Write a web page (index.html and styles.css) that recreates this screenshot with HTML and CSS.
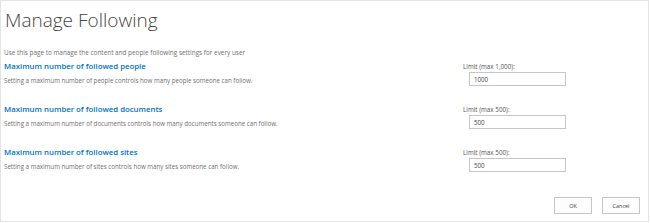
FILE: index.html
```html
<!DOCTYPE html>
<html>
<head>
<meta charset="utf-8">
<link rel="stylesheet" href="styles.css">
</head>
<body>
<div class="frame">
  <h1 class="title">Manage Following</h1>
  <p class="intro">Use this page to manage the content and people following settings for every user</p>
  <div class="section">
    <div class="info">
      <h2 class="heading">Maximum number of followed people</h2>
      <p class="desc">Setting a maximum number of people controls how many people someone can follow.</p>
    </div>
    <div class="field">
      <label class="label">Limit (max 1,000):</label>
      <input class="input" type="text" value="1000">
    </div>
  </div>
  <div class="section">
    <div class="info">
      <h2 class="heading">Maximum number of followed documents</h2>
      <p class="desc">Setting a maximum number of documents controls how many documents someone can follow.</p>
    </div>
    <div class="field">
      <label class="label">Limit (max 500):</label>
      <input class="input" type="text" value="500">
    </div>
  </div>
  <div class="section">
    <div class="info">
      <h2 class="heading">Maximum number of followed sites</h2>
      <p class="desc">Setting a maximum number of sites controls how many sites someone can follow.</p>
    </div>
    <div class="field">
      <label class="label">Limit (max 500):</label>
      <input class="input" type="text" value="500">
    </div>
  </div>
  <div class="buttons">
    <button class="btn">OK</button>
    <button class="btn">Cancel</button>
  </div>
</div>
</body>
</html>
```

FILE: styles.css
```css
html, body {
  margin: 0;
  padding: 0;
  background: #ffffff;
}
body {
  font-family: "Open Sans", "Noto Sans", sans-serif;
  color: #777;
}
.frame {
  box-sizing: border-box;
  width: 649px;
  height: 222px;
  border: 1px solid #e4e4e4;
  padding: 0 0 0 3px;
  display: flex;
  flex-direction: column;
}
.title {
  margin: 5px 0 0 1px;
  font-size: 19px;
  font-weight: 300;
  line-height: 28px;
  color: #444;
}
.intro {
  margin: 14px 0 0 0;
  font-size: 6.4px;
  line-height: 10px;
  color: #6f6f6f;
}
.section {
  display: flex;
  margin-top: 2px;
  height: 38px;
}
.section + .section {
  margin-top: 5px;
}
.info {
  width: 459px;
}
.heading {
  margin: 0;
  font-size: 7.8px;
  font-weight: 600;
  line-height: 12px;
  color: #0072c6;
}
.desc {
  margin: 4px 0 0 0;
  font-size: 6.2px;
  line-height: 10px;
  color: #6f6f6f;
}
.field {
  display: flex;
  flex-direction: column;
  align-items: flex-start;
  padding-top: 2px;
}
.label {
  font-size: 6.3px;
  line-height: 10px;
  color: #555;
}
.input {
  box-sizing: border-box;
  margin: 0 0 0 6px;
  width: 97px;
  height: 14px;
  border: 1px solid #c6c6c6;
  padding: 0 0 0 4px;
  font-family: "Open Sans", "Noto Sans", sans-serif;
  font-size: 6.2px;
  color: #444;
  outline: none;
}
.buttons {
  margin-top: auto;
  margin-bottom: 7px;
  display: flex;
  justify-content: flex-end;
  gap: 10px;
  padding-right: 8px;
}
.btn {
  box-sizing: border-box;
  width: 38px;
  height: 17px;
  border: 1px solid #c6c6c6;
  background: #fdfdfd;
  padding: 0;
  font-family: "Open Sans", "Noto Sans", sans-serif;
  font-size: 5.5px;
  color: #444;
}
```
